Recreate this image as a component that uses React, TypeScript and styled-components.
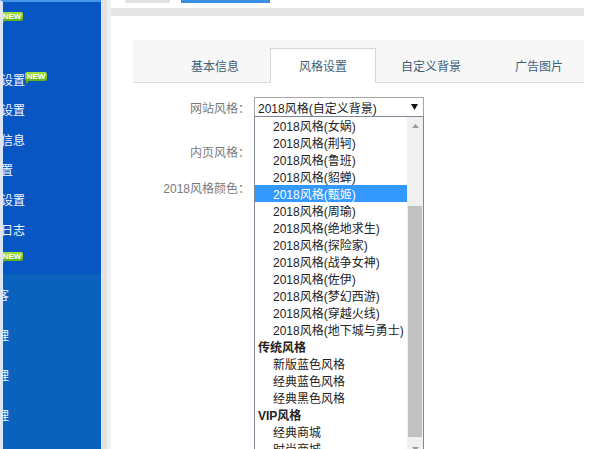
import styled, { createGlobalStyle } from "styled-components";

const GlobalStyle = createGlobalStyle`
  html, body {
    margin: 0;
    padding: 0;
    background: #fff;
  }
  body {
    font-family: "Liberation Sans", "Noto Sans CJK SC", sans-serif;
    font-size: 12px;
    color: #222;
  }
`;

// sidebar is scrolled sideways in the shot, so labels are partly cut off on the left
const SUB_ITEMS = [
  { label: "模板", isNew: true },
  { label: "概况" },
  { label: "网站设置", isNew: true },
  { label: "风格设置" },
  { label: "联系信息" },
  { label: "云配置" },
  { label: "邮件设置" },
  { label: "操作日志" },
  { label: "签到", isNew: true },
];

const MAIN_ITEMS = ["最近访客", "订单管理", "会员管理", "商品管理", "系统管理"];

const TABS = ["基本信息", "风格设置", "自定义背景", "广告图片"];

type Option = { label: string; group?: boolean; selected?: boolean };

const OPTIONS: Option[] = [
  { label: "2018风格(女娲)" },
  { label: "2018风格(荆轲)" },
  { label: "2018风格(鲁班)" },
  { label: "2018风格(貂蝉)" },
  { label: "2018风格(甄姬)", selected: true },
  { label: "2018风格(周瑜)" },
  { label: "2018风格(绝地求生)" },
  { label: "2018风格(探险家)" },
  { label: "2018风格(战争女神)" },
  { label: "2018风格(佐伊)" },
  { label: "2018风格(梦幻西游)" },
  { label: "2018风格(穿越火线)" },
  { label: "2018风格(地下城与勇士)" },
  { label: "传统风格", group: true },
  { label: "新版蓝色风格" },
  { label: "经典蓝色风格" },
  { label: "经典黑色风格" },
  { label: "VIP风格", group: true },
  { label: "经典商城" },
  { label: "时尚商城" },
  { label: "简约商城" },
];

export default function App() {
  return (
    <>
      <GlobalStyle />
      <Page>
        <Sidebar>
          <Menu>
            <SubSection>
              {SUB_ITEMS.map((item) => (
                <SubItem key={item.label}>
                  {item.label}
                  {item.isNew && <NewBadge>NEW</NewBadge>}
                </SubItem>
              ))}
            </SubSection>
            <MainSection>
              {MAIN_ITEMS.map((label) => (
                <MainItem key={label}>{label}</MainItem>
              ))}
            </MainSection>
          </Menu>
        </Sidebar>
        <Gutter />
        <Main>
          <TopStrip>
            <Stub $w={45} $ml={14} $color="#e3e3e3" />
            <Stub $w={89} $ml={11} $color="#3b8fe3" />
          </TopStrip>
          <Panel>
            <PanelHead />
            <PanelBody>
              <TabBar>
                {TABS.map((tab) => (
                  <Tab key={tab} $active={tab === "风格设置"}>
                    {tab}
                  </Tab>
                ))}
              </TabBar>
              <Form>
                <FormRow $h={20} $mt={14}>
                  <Label>网站风格：</Label>
                  <SelectBox>
                    <span>2018风格(自定义背景)</span>
                    <svg width="7" height="6" viewBox="0 0 7 6">
                      <polygon points="0,0 7,0 3.5,6" fill="#111" />
                    </svg>
                    <DropList>
                      <Options>
                        {OPTIONS.map((opt) => (
                          <OptionRow
                            key={opt.label}
                            $group={!!opt.group}
                            $selected={!!opt.selected}
                          >
                            {opt.label}
                          </OptionRow>
                        ))}
                      </Options>
                      <Scrollbar>
                        <ScrollButton>
                          <svg width="7" height="4" viewBox="0 0 7 4">
                            <polygon points="0,4 7,4 3.5,0" fill="#9a9a9a" />
                          </svg>
                        </ScrollButton>
                        <Thumb />
                        <TrackRest />
                        <ScrollButton>
                          <svg width="7" height="4" viewBox="0 0 7 4">
                            <polygon points="0,0 7,0 3.5,4" fill="#9a9a9a" />
                          </svg>
                        </ScrollButton>
                      </Scrollbar>
                    </DropList>
                  </SelectBox>
                </FormRow>
                {/* these two controls sit under the open list */}
                <FormRow $h={24} $mt={22}>
                  <Label>内页风格：</Label>
                  <SelectBox />
                </FormRow>
                <FormRow $h={24} $mt={12}>
                  <Label>2018风格颜色：</Label>
                  <SelectBox />
                </FormRow>
              </Form>
            </PanelBody>
          </Panel>
        </Main>
      </Page>
    </>
  );
}

// Styled Components

const Page = styled.div`
  display: flex;
  width: 605px;
  height: 449px;
  overflow: hidden;
`;

const Sidebar = styled.aside`
  display: flex;
  flex-direction: column;
  flex-shrink: 0;
  width: 98px;
  border-left: 3px solid #dce6f2;
  border-top: 2px solid #4696ea;
  background: #0756c3;
  overflow: hidden;
`;

const Menu = styled.nav`
  display: flex;
  flex-direction: column;
  flex: 1;
  width: 200px;
  margin-left: -60px;
`;

const SubSection = styled.div`
  padding-top: 2px;
`;

const SubItem = styled.div`
  display: flex;
  align-items: center;
  height: 30px;
  padding-left: 34px;
  color: #f4f8ff;
  font-size: 12px;
  white-space: nowrap;
`;

const NewBadge = styled.span`
  position: relative;
  display: inline-flex;
  align-items: center;
  justify-content: center;
  width: 22px;
  height: 9px;
  margin-bottom: 6px;
  border-radius: 2px;
  background: linear-gradient(#a6e340, #5fae12);
  color: #fff;
  font: bold 8px/9px "Liberation Sans", sans-serif;

  &::after {
    content: "";
    position: absolute;
    left: 1px;
    bottom: -3px;
    border: 2px solid transparent;
    border-top-color: #5fae12;
    border-left-color: #5fae12;
  }
`;

const MainSection = styled.div`
  flex: 1;
  background: #0a62bd;
`;

const MainItem = styled.div`
  display: flex;
  align-items: center;
  height: 40px;
  padding-left: 18px;
  color: #f4f8ff;
  font-size: 12px;
  white-space: nowrap;
`;

const Gutter = styled.div`
  flex-shrink: 0;
  width: 6px;
  background: #e2e2e2;
  border-right: 4px solid #efefef;
`;

const Main = styled.main`
  display: flex;
  flex-direction: column;
  flex-shrink: 0;
  width: 473px;
`;

const TopStrip = styled.div`
  display: flex;
  align-items: flex-start;
  height: 8px;
`;

const Stub = styled.div<{ $w: number; $ml: number; $color: string }>`
  width: ${({ $w }) => $w}px;
  height: 3px;
  margin-left: ${({ $ml }) => $ml}px;
  background: ${({ $color }) => $color};
`;

const Panel = styled.section`
  display: flex;
  flex-direction: column;
  flex: 1;
`;

const PanelHead = styled.div`
  height: 8px;
  background: #e5e5e5;
`;

const PanelBody = styled.div`
  flex: 1;
  padding: 24px 0 0 22px;
`;

const TabBar = styled.div`
  display: flex;
  align-items: flex-end;
  height: 42px;
  padding-left: 29px;
  background: #f7f7f7;
  border-bottom: 1px solid #dedede;
`;

const Tab = styled.div<{ $active: boolean }>`
  display: flex;
  align-items: center;
  justify-content: center;
  flex-shrink: 0;
  box-sizing: border-box;
  width: 106px;
  height: 35px;
  margin-right: 2px;
  margin-bottom: -1px;
  color: #3f5f78;
  font-size: 12px;
  background: ${({ $active }) => ($active ? "#fff" : "transparent")};
  border: 1px solid ${({ $active }) => ($active ? "#d6d6d6" : "transparent")};
  border-bottom-color: ${({ $active }) => ($active ? "#fff" : "transparent")};
`;

const Form = styled.div`
  display: flex;
  flex-direction: column;
`;

const FormRow = styled.div<{ $h: number; $mt: number }>`
  display: flex;
  align-items: center;
  gap: 4px;
  height: ${({ $h }) => $h}px;
  margin-top: ${({ $mt }) => $mt}px;
`;

const Label = styled.label`
  width: 117px;
  text-align: right;
  color: #7a7a7a;
  font-size: 12px;
  white-space: nowrap;
`;

const SelectBox = styled.div`
  position: relative;
  display: flex;
  align-items: center;
  justify-content: space-between;
  box-sizing: border-box;
  width: 170px;
  height: 20px;
  padding: 0 5px 0 3px;
  border: 1px solid #a6a6a6;
  background: #fff;
  color: #222;
  font-size: 12px;
  white-space: nowrap;
`;

const DropList = styled.div`
  position: absolute;
  top: 18px;
  left: -1px;
  z-index: 10;
  display: flex;
  box-sizing: border-box;
  width: 170px;
  height: 342px;
  border: 1px solid #7d8894;
  background: #fff;
`;

const Options = styled.div`
  display: flex;
  flex-direction: column;
  flex: 1;
  overflow: hidden;
`;

const OptionRow = styled.div<{ $group: boolean; $selected: boolean }>`
  display: flex;
  align-items: center;
  flex-shrink: 0;
  height: 17px;
  padding-left: ${({ $group }) => ($group ? 3 : 18)}px;
  font-weight: ${({ $group }) => ($group ? 700 : 400)};
  background: ${({ $selected }) => ($selected ? "#3399ff" : "transparent")};
  color: ${({ $selected }) => ($selected ? "#fff" : "#222")};
  white-space: nowrap;
`;

const Scrollbar = styled.div`
  display: flex;
  flex-direction: column;
  width: 16px;
  background: #f0f0f0;
`;

const ScrollButton = styled.div`
  display: flex;
  align-items: center;
  justify-content: center;
  flex-shrink: 0;
  height: 17px;
`;

const Thumb = styled.div`
  flex-shrink: 0;
  height: 231px;
  margin: 72px 1px 0;
  background: #c1c1c1;
`;

const TrackRest = styled.div`
  flex: 1;
`;
